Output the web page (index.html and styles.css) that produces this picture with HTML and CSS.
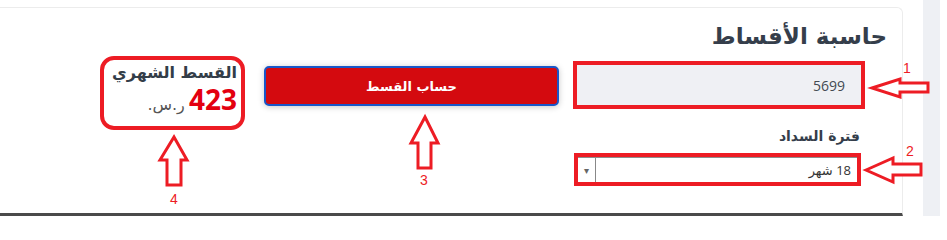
FILE: index.html
```html
<!DOCTYPE html>
<html lang="ar">
<head>
<meta charset="utf-8">
<title>حاسبة الأقساط</title>
<link rel="stylesheet" href="styles.css">
</head>
<body>
<div class="page">
  <section class="card">
    <h1 class="title">حاسبة الأقساط</h1>
    <div class="row">
      <div class="form-col">
        <div class="mark-box">
          <input class="amount" type="text" value="5699">
        </div>
        <label class="field-label">فترة السداد</label>
        <div class="mark-box mark-select">
          <div class="select">
            <span class="select-text">18 شهر</span>
            <span class="select-arrow">▾</span>
          </div>
        </div>
      </div>
      <div class="btn-col">
        <button class="calc-btn" type="button">حساب القسط</button>
      </div>
      <div class="result">
        <div class="result-title">القسط الشهري</div>
        <div class="result-value"><span class="amount-big">423</span> <span class="currency">ر.س.</span></div>
      </div>
    </div>
  </section>
  <div class="gap"></div>
  <div class="strip"></div>
  <div class="edge"></div>
</div>
<svg class="notes" width="947" height="216" viewBox="0 0 947 216">
  <g class="arrow">
    <polygon points="872,88 900,79 900,83 928,83 928,92 900,92 900,97"/>
    <polygon points="866,170 893,158 893,164 921,164 921,175 893,175 893,182"/>
    <polygon points="425,117 438,143 431,143 431,168 418,168 418,143 411,143"/>
    <polygon points="174,137 187,160 181,160 181,185 167,185 167,160 160,160"/>
  </g>
  <g class="num">
    <text x="907" y="73">1</text>
    <text x="910" y="156">2</text>
    <text x="424" y="185">3</text>
    <text x="174" y="204">4</text>
  </g>
</svg>
</body>
</html>
```
FILE: styles.css
```css
html, body {
  margin: 0;
  padding: 0;
  background: #ffffff;
}
body {
  width: 947px;
  height: 216px;
  overflow: hidden;
  position: relative;
  font-family: "Open Sans", "DejaVu Sans", sans-serif;
}
.page {
  display: flex;
  height: 216px;
}
.card {
  box-sizing: border-box;
  width: 903px;
  margin-top: 7px;
  height: 209px;
  border-top: 1px solid #ececec;
  border-right: 1px solid #ececec;
  border-bottom: 3px solid #4a4a4a;
  border-top-right-radius: 6px;
  direction: rtl;
  padding: 12px 15px 0 0;
}
.gap { width: 20px; }
.strip { width: 17px; background: #eef0f4; }
.edge { width: 7px; }

.title {
  margin: 0;
  font-family: "DejaVu Sans", sans-serif;
  font-size: 23px;
  font-weight: bold;
  line-height: 32px;
  color: #353e4b;
}
.row {
  display: flex;
  align-items: flex-start;
  gap: 14px;
  margin-top: 9px;
  margin-right: 22px;
}
.form-col {
  width: 292px;
  display: flex;
  flex-direction: column;
}
.mark-box {
  border: 4px solid #ed1c24;
  height: 40px;
}
.amount {
  box-sizing: border-box;
  width: 100%;
  height: 40px;
  border: none;
  margin: 0;
  background: #eff0f4;
  padding: 0 16px 0 0;
  text-align: right;
  direction: rtl;
  font-family: "Open Sans", sans-serif;
  font-size: 14px;
  color: #444a52;
  outline: none;
}
.field-label {
  font-family: "DejaVu Sans", sans-serif;
  font-size: 14px;
  font-weight: bold;
  color: #353e4b;
  line-height: 22px;
  margin: 16px 5px 6px 0;
}
.mark-select {
  height: 25px;
  margin-left: 1px;
  margin-right: 4px;
}
.select {
  box-sizing: border-box;
  height: 25px;
  display: flex;
  align-items: center;
  border-top: 1px solid #8d8d8d;
  background: #fff;
}
.select-text {
  flex: 1;
  padding-right: 6px;
  font-family: "Open Sans", "DejaVu Sans", sans-serif;
  font-size: 13px;
  color: #333;
}
.select-arrow {
  width: 17px;
  align-self: stretch;
  display: flex;
  align-items: center;
  justify-content: center;
  border-right: 1px solid #888;
  font-size: 10px;
  color: #666;
}
.btn-col {
  width: 295px;
}
.calc-btn {
  display: block;
  box-sizing: border-box;
  width: 295px;
  height: 40px;
  margin-top: 5px;
  border: 2px solid #1857c9;
  border-radius: 5px;
  background: #d40a0f;
  color: #ffffff;
  font-family: "DejaVu Sans", sans-serif;
  font-size: 13px;
  font-weight: bold;
  box-shadow: 0 1px 6px rgba(0, 0, 0, 0.22);
}
.result {
  box-sizing: border-box;
  width: 145px;
  height: 74px;
  margin-top: -5px;
  margin-right: 5px;
  border: 4px solid #ed1c24;
  border-radius: 14px;
  padding: 2px 4px 0 0;
}
.result-title {
  font-family: "DejaVu Sans", sans-serif;
  font-size: 16px;
  font-weight: bold;
  color: #333d48;
  line-height: 22px;
}
.result-value {
  line-height: 30px;
  white-space: nowrap;
}
.amount-big {
  font-family: "Open Sans", sans-serif;
  font-size: 28px;
  font-weight: bold;
  color: #e3000f;
}
.currency {
  font-family: "DejaVu Sans", sans-serif;
  font-size: 16px;
  color: #555;
}
.notes {
  position: absolute;
  left: 0;
  top: 0;
  pointer-events: none;
}
.arrow polygon {
  fill: #ffffff;
  stroke: #ed1c24;
  stroke-width: 3;
  stroke-linejoin: miter;
}
.num text {
  fill: #ed1c24;
  font-family: "Liberation Sans", sans-serif;
  font-size: 14px;
  text-anchor: middle;
}
```
